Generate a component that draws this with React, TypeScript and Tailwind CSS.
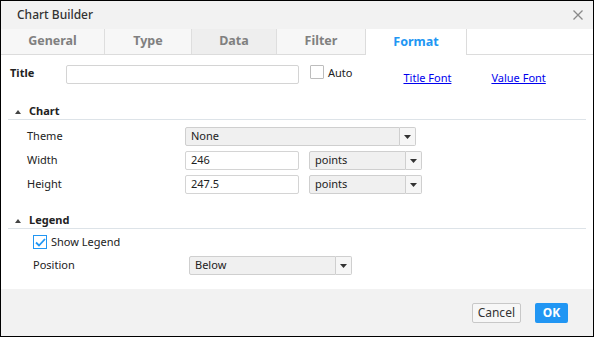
import { useState } from "react";

const tabs = [
  { label: "General", w: "w-[103px]", bg: "bg-[#f7f7f7]" },
  { label: "Type", w: "w-[87px]", bg: "bg-[#f7f7f7]" },
  { label: "Data", w: "w-[85px]", bg: "bg-[#eeeeee]" },
  { label: "Filter", w: "w-[89px]", bg: "bg-[#f7f7f7]" },
];

function Caret() {
  return (
    <svg width="7" height="4" viewBox="0 0 7 4">
      <path d="M0 0 L7 0 L3.5 4 Z" fill="#333" />
    </svg>
  );
}

function Select({
  value,
  w,
}: {
  value: string;
  w: string;
}) {
  return (
    <div className="flex h-[19px]">
      <div
        className={`${w} flex items-center rounded-l-[2px] border border-[#cfcfcf] bg-[#f0f0f0] px-[5px] text-[11px] text-[#222]`}
      >
        {value}
      </div>
      <div className="flex w-[16px] items-center justify-center rounded-r-[2px] border border-l-0 border-[#cfcfcf] bg-[#f6f6f6]">
        <Caret />
      </div>
    </div>
  );
}

function Input({ value, w }: { value: string; w: string }) {
  return (
    <div
      className={`${w} flex h-[19px] items-center rounded-[2px] border border-[#d4d4d4] bg-white px-[5px] text-[11px] text-[#222]`}
    >
      {value}
    </div>
  );
}

function SectionHeader({ title }: { title: string }) {
  return (
    <div className="mx-[7px] flex h-[16px] items-start border-b border-[#dde3e8]">
      <svg width="6" height="4" viewBox="0 0 6 4" className="ml-[7px] mt-[6px]">
        <path d="M0 4 L6 4 L3 0 Z" fill="#444" />
      </svg>
      <span className="ml-[8px] text-[11px] leading-[14px] font-bold text-[#222]">
        {title}
      </span>
    </div>
  );
}

export default function App() {
  const [showLegend, setShowLegend] = useState(true);

  return (
    <div
      className="flex h-[337px] w-[594px] flex-col border border-black bg-white"
      style={{ fontFamily: '"Noto Sans", "Open Sans", sans-serif' }}
    >
      {/* Title bar */}
      <div className="flex h-[28px] items-center justify-between bg-[#f2f2f2] pl-[16px] pr-[10px]">
        <span className="text-[12px] font-medium text-[#333]">Chart Builder</span>
        <svg width="10" height="10" viewBox="0 0 10 10">
          <path d="M0.5 0.5 L9.5 9.5 M9.5 0.5 L0.5 9.5" stroke="#8a8a8a" strokeWidth="1.3" />
        </svg>
      </div>

      {/* Tabs */}
      <div className="flex h-[26px] border-b border-[#dcdcdc]">
        {tabs.map((t, i) => (
          <div
            key={t.label}
            className={`${t.w} ${t.bg} flex items-center justify-center text-[12.5px] font-bold text-[#808080] ${
              i > 0 ? "border-l border-[#dedede]" : ""
            }`}
          >
            {t.label}
          </div>
        ))}
        <div className="-mb-px flex w-[102px] items-center justify-center border-x border-[#dcdcdc] bg-white text-[12.5px] font-bold text-[#2196f3]">
          Format
        </div>
        <div className="flex-1 bg-white" />
      </div>

      {/* Content */}
      <div className="flex-1">
        <div className="mt-[10px] flex h-[19px] items-start">
          <span className="ml-[9px] w-[56px] text-[11px] leading-[15px] font-bold text-[#222]">
            Title
          </span>
          <Input value="" w="w-[233px]" />
          <div className="ml-[11px] h-[14px] w-[14px] rounded-[1px] border border-[#bdbdbd] bg-white" />
          <span className="ml-[4px] text-[11px] leading-[15px] text-[#222]">Auto</span>
          <a className="ml-[51px] mt-[5px] text-[11px] leading-[15px] text-[#0000ee] underline">
            Title Font
          </a>
          <a className="ml-[40px] mt-[5px] text-[11px] leading-[15px] text-[#0000ee] underline">
            Value Font
          </a>
        </div>

        <div className="mt-[20px]">
          <SectionHeader title="Chart" />
        </div>
        <div className="mt-[7px] flex flex-col gap-[5px]">
          <div className="flex items-center">
            <span className="ml-[26px] w-[158px] text-[11px] text-[#222]">Theme</span>
            <Select value="None" w="w-[215px]" />
          </div>
          <div className="flex items-center">
            <span className="ml-[26px] w-[158px] text-[11px] text-[#222]">Width</span>
            <Input value="246" w="w-[114px]" />
            <div className="ml-[10px]">
              <Select value="points" w="w-[97px]" />
            </div>
          </div>
          <div className="flex items-center">
            <span className="ml-[26px] w-[158px] text-[11px] text-[#222]">Height</span>
            <Input value="247.5" w="w-[114px]" />
            <div className="ml-[10px]">
              <Select value="points" w="w-[97px]" />
            </div>
          </div>
        </div>

        <div className="mt-[19px]">
          <SectionHeader title="Legend" />
        </div>
        <div
          className="ml-[32px] mt-[6px] flex h-[14px] cursor-pointer items-center"
          onClick={() => setShowLegend(!showLegend)}
        >
          <div className="flex h-[14px] w-[14px] items-center justify-center border border-[#2196f3] bg-white">
            {showLegend && (
              <svg width="11" height="9" viewBox="0 0 11 9">
                <path d="M1 4.5 L4 7.5 L10 1" stroke="#2196f3" strokeWidth="1.8" fill="none" />
              </svg>
            )}
          </div>
          <span className="ml-[4px] text-[11px] text-[#222]">Show Legend</span>
        </div>
        <div className="mt-[7px] flex items-center">
          <span className="ml-[32px] w-[156px] text-[11px] text-[#222]">Position</span>
          <Select value="Below" w="w-[147px]" />
        </div>
      </div>

      {/* Footer */}
      <div className="flex h-[47px] items-center justify-end gap-[14px] bg-[#f2f2f2] pr-[25px]">
        <button className="h-[20px] rounded-[2px] border border-[#c8c8c8] bg-[#f7f7f7] px-[5px] text-[12px] text-[#333]">
          Cancel
        </button>
        <button className="h-[20px] w-[33px] rounded-[2px] bg-[#2196f3] text-[12px] font-bold text-white">
          OK
        </button>
      </div>
    </div>
  );
}
